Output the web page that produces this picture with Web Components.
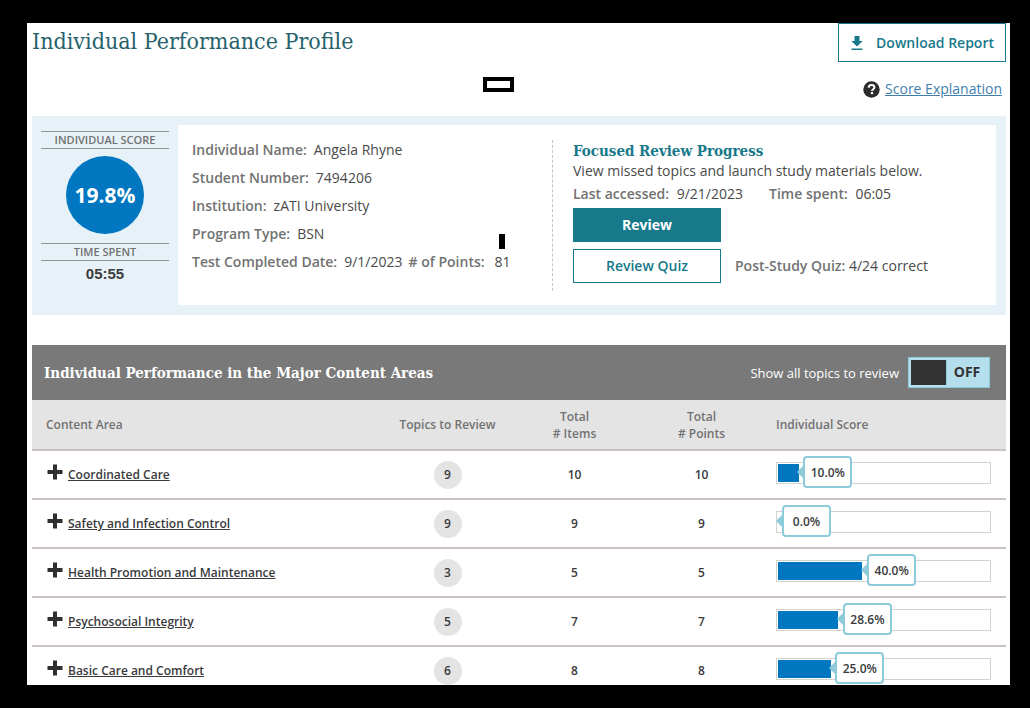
<!DOCTYPE html>
<html lang="en">
<head>
<meta charset="utf-8">
<title>Individual Performance Profile</title>
<style>
  html { height: 100%; background: #000; }
  body {
    margin: 0; height: 100vh; box-sizing: border-box; padding: 23px 20px 23px 27px;
    display: flex; flex-direction: column; overflow: hidden; background: #000;
    font: 14px/20px "Open Sans", "Noto Sans", sans-serif; color: #4a4a4a;
    --teal: #17798a; --blue: #0077c0; --pale: #e7f2f8; --muted: #727272; --ink: #3a3a3c;
    --slab: "Roboto Slab", "DejaVu Serif Condensed", "DejaVu Serif", serif;
  }
</style>
</head>
<body>
<report-page>
  <report-header slot="header" heading="Individual Performance Profile"></report-header>
  <score-summary slot="summary">
    <score-dial slot="score" score="19.8%" time="05:55"></score-dial>
    <student-info slot="info"></student-info>
    <review-progress slot="review"></review-progress>
  </score-summary>
  <content-areas></content-areas>
</report-page>

<script>
function define(name, html, setup) {
  const template = document.createElement('template');
  template.innerHTML = html;
  customElements.define(name, class extends HTMLElement {
    constructor() {
      super();
      this.attachShadow({ mode: 'open' }).append(template.content.cloneNode(true));
    }
    connectedCallback() { if (setup) setup(this, this.shadowRoot); }
  });
}

define('report-page', `
  <style>
    :host { display: block; flex: 1; min-height: 0; overflow: hidden; background: #fff; padding: 0 4px 0 5px; }
    main { display: flex; flex-direction: column; }
    .areas { margin-top: 30px; }
  </style>
  <main>
    <slot name="header"></slot>
    <slot name="summary"></slot>
    <div class="areas"><slot></slot></div>
  </main>`);

define('report-header', `
  <style>
    :host { display: block; position: relative; height: 93px; }
    .top { display: flex; justify-content: space-between; align-items: flex-start; }
    h1 { margin: 0; font: 400 23px/36px var(--slab); color: #27626c; white-space: nowrap; }
    button {
      display: flex; align-items: center; gap: 12px; height: 39px; padding: 0 11px;
      border: 1px solid var(--teal); background: #fff; color: var(--teal);
      font: 600 14px/20px "Open Sans", sans-serif; cursor: pointer;
    }
    .help { display: flex; justify-content: flex-end; align-items: center; gap: 5px; padding: 17px 4px 0 0; }
    a { color: #3f7fae; text-decoration: underline; }
    .mark { position: absolute; left: 451px; top: 54px; width: 23px; height: 7px; border: 4px solid #000; }
  </style>
  <div class="top">
    <h1></h1>
    <button type="button">
      <svg width="14" height="16" viewBox="0 0 14 16" fill="currentColor" aria-hidden="true"><path d="M4.5 1h5v5h3.2L7 11.5 1.3 6h3.2zM1.5 13.5h11V15h-11z"/></svg>
      Download Report
    </button>
  </div>
  <div class="help">
    <svg width="17" height="17" viewBox="0 0 17 17" aria-hidden="true"><circle cx="8.500" cy="8.500" r="8.200" fill="#2b2b2d"/><path d="M5.700 6.700C5.700 4.800 7 4 8.500 4s2.900.8 2.900 2.400c0 1.700-2.400 1.900-2.400 3.500" fill="none" stroke="#fff" stroke-width="2"/><rect x="7.800" y="11" width="2.300" height="2.200" fill="#fff"/></svg>
    <a href="#score-explanation">Score Explanation</a>
  </div>
  <span class="mark"></span>`,
  (el, root) => { root.querySelector('h1').textContent = el.getAttribute('heading'); });

define('score-summary', `
  <style>
    :host { display: grid; grid-template-columns: 128px 1fr; gap: 9px; padding: 9px 10px 10px 9px; background: var(--pale); }
    .card { display: grid; grid-template-columns: 361px 1fr; background: #fff; padding: 12px 14px 14px; min-height: 154px; }
    .left { border-right: 1px dashed #c4c4c4; margin-top: 3px; }
    .right { padding-left: 20px; }
  </style>
  <slot name="score"></slot>
  <div class="card">
    <div class="left"><slot name="info"></slot></div>
    <div class="right"><slot name="review"></slot></div>
  </div>`);

define('score-dial', `
  <style>
    :host { display: flex; flex-direction: column; align-items: center; padding-top: 6px; }
    h2 {
      align-self: stretch; margin: 0; text-align: center; font: 600 11px/16px "Open Sans", sans-serif;
      color: var(--muted); border: solid #8f9496; border-width: 1px 0;
    }
    .dial {
      display: grid; place-items: center; width: 78px; height: 78px; margin: 7px 0 9px; border-radius: 50%;
      background: var(--blue); color: #fff; font: 700 21px/30px "Open Sans", sans-serif;
    }
    .time { margin-top: 3px; font: 700 15px/20px "Liberation Sans", sans-serif; color: #3c3c3c; }
  </style>
  <h2>INDIVIDUAL SCORE</h2>
  <div class="dial"></div>
  <h2>TIME SPENT</h2>
  <div class="time"></div>`,
  (el, root) => {
    root.querySelector('.dial').textContent = el.getAttribute('score');
    root.querySelector('.time').textContent = el.getAttribute('time');
  });

define('student-info', `
  <style>
    :host { display: block; position: relative; }
    dl { margin: 0; line-height: 28px; margin-top: -4px; white-space: nowrap; }
    .row { display: flex; }
    dt { font-weight: 600; color: var(--muted); margin-right: 7px; }
    dd { margin: 0 6px 0 0; }
    .points { margin-right: 10px; }
    .mark { position: absolute; left: 307px; top: 98px; width: 6px; height: 15px; background: #000; }
  </style>
  <dl>
    <div class="row"><dt>Individual Name:</dt><dd>Angela Rhyne</dd></div>
    <div class="row"><dt>Student Number:</dt><dd>7494206</dd></div>
    <div class="row"><dt>Institution:</dt><dd>zATI University</dd></div>
    <div class="row"><dt>Program Type:</dt><dd>BSN</dd></div>
    <div class="row"><dt>Test Completed Date:</dt><dd>9/1/2023</dd><dt class="points"># of Points:</dt><dd>81</dd></div>
  </dl>
  <span class="mark"></span>`);

define('review-progress', `
  <style>
    :host { display: block; white-space: nowrap; }
    h2 { margin: 4px 0 0; font: 700 15px/20px var(--slab); color: var(--teal); }
    p { margin: 0; }
    b { font-weight: 600; color: var(--muted); }
    .meta { display: flex; gap: 26px; margin: 3px 0 4px; }
    .meta b { margin-right: 4px; }
    button {
      display: block; width: 148px; height: 34px; padding: 0; border: 1px solid var(--teal);
      font: 600 14px/20px "Open Sans", sans-serif; cursor: pointer;
    }
    .primary { background: var(--teal); color: #fff; font-weight: 700; }
    .outline { background: #fff; color: var(--teal); }
    .quiz { display: flex; align-items: center; gap: 14px; margin-top: 7px; }
  </style>
  <h2>Focused Review Progress</h2>
  <p>View missed topics and launch study materials below.</p>
  <div class="meta"><span><b>Last accessed:</b> 9/21/2023</span><span><b>Time spent:</b> 06:05</span></div>
  <button type="button" class="primary">Review</button>
  <div class="quiz"><button type="button" class="outline">Review Quiz</button><span><b>Post-Study Quiz:</b> 4/24 correct</span></div>`);

define('topic-toggle', `
  <style>
    :host { display: flex; align-items: center; gap: 9px; color: #fff; font-size: 13px; }
    .switch {
      display: flex; box-sizing: border-box; width: 82px; height: 31px; padding: 2px;
      background: #b5dfec; border: 1px solid #8ccbdb; cursor: pointer;
    }
    input { appearance: none; flex: none; width: 36px; height: 25px; margin: 0; background: #333; border-right: 1px solid #8ccbdb; cursor: pointer; }
    .state { flex: 1; text-align: center; font: 700 14px/24px "Open Sans", sans-serif; color: #333; }
  </style>
  <label for="all">Show all topics to review</label>
  <label class="switch"><input type="checkbox" role="switch" id="all"><span class="state">OFF</span></label>`);

define('score-bar', `
  <style>
    :host { display: block; }
    .track { position: relative; box-sizing: border-box; height: 22px; border: 1px solid #d2d2d2; padding: 1px; background: #fff; }
    .fill { height: 100%; width: var(--score); background: var(--blue); }
    .tag {
      position: absolute; left: calc(var(--score) + 5px); top: -7px; box-sizing: border-box; width: 49px; height: 32px;
      border: 2px solid #8dcbda; border-radius: 4px; background: #fff; text-align: center; font: 600 12px/29px "Open Sans", sans-serif; color: var(--ink);
    }
    .tag::before { content: ""; position: absolute; left: -8px; top: 7px; border: solid transparent; border-width: 7px 7px 7px 0; border-right-color: #8dcbda; }
  </style>
  <div class="track"><div class="fill"></div><div class="tag"></div></div>`,
  (el, root) => {
    const value = el.getAttribute('value');
    el.style.setProperty('--score', value + '%');
    root.querySelector('.tag').textContent = value + '%';
  });

define('content-areas', `
  <style>
    :host { display: block; }
    header { display: flex; align-items: center; justify-content: space-between; height: 55px; padding: 0 16px 0 12px; background: #797979; }
    h2 { margin: 0; font: 700 15px/20px var(--slab); color: #fff; white-space: nowrap; }
    table { width: 100%; border-collapse: separate; border-spacing: 0; table-layout: fixed; font-weight: 600; font-size: 12px; line-height: 17px; }
    .num { width: 127px; }
    .score { width: 241px; }
    th, td { box-sizing: border-box; height: 49px; padding: 0; border-bottom: 2px solid #cbc2c5; text-align: center; vertical-align: middle; }
    th { height: 51px; background: #e4e4e4; color: var(--muted); font-weight: 600; }
    td { color: var(--ink); }
    th:first-child { text-align: left; padding-left: 14px; }
    th:last-child { text-align: left; padding-left: 11px; }
    td:first-child { text-align: left; padding-left: 15px; }
    td:last-child { padding: 0 15px 4px 11px; }
    .area { display: flex; align-items: center; gap: 5px; }
    button { display: block; padding: 0 0 6px; border: 0; background: none; color: #2f2f31; cursor: pointer; }
    svg { display: block; }
    a { color: var(--ink); text-decoration: underline; }
    .badge { display: grid; place-items: center; width: 28px; height: 28px; margin: 0 auto; border-radius: 50%; background: #e4e4e4; }
  </style>
  <header><h2>Individual Performance in the Major Content Areas</h2><topic-toggle></topic-toggle></header>
  <table>
    <colgroup><col><col class="num"><col class="num"><col class="num"><col class="score"></colgroup>
    <thead><tr><th scope="col">Content Area</th><th scope="col">Topics to Review</th><th scope="col">Total<br># Items</th><th scope="col">Total<br># Points</th><th scope="col">Individual Score</th></tr></thead>
    <tbody></tbody>
  </table>`,
  (el, root) => {
    const rows = [
      ['Coordinated Care', 9, 10, 10, '10.0'],
      ['Safety and Infection Control', 9, 9, 9, '0.0'],
      ['Health Promotion and Maintenance', 3, 5, 5, '40.0'],
      ['Psychosocial Integrity', 5, 7, 7, '28.6'],
      ['Basic Care and Comfort', 6, 8, 8, '25.0'],
    ];
    root.querySelector('tbody').innerHTML = rows.map(([area, topics, items, points, score]) => `
      <tr>
        <td><div class="area"><button type="button" aria-label="Expand ${area}"><svg width="16" height="16" viewBox="0 0 16 16" fill="currentColor"><path d="M6 0.500h4v5.500h5.500v4H10v5.500H6V10H0.500V6H6z"/></svg></button><a href="#area">${area}</a></div></td>
        <td><span class="badge">${topics}</span></td>
        <td>${items}</td><td>${points}</td>
        <td><score-bar value="${score}"></score-bar></td>
      </tr>`).join('');
  });
</script>
</body>
</html>
